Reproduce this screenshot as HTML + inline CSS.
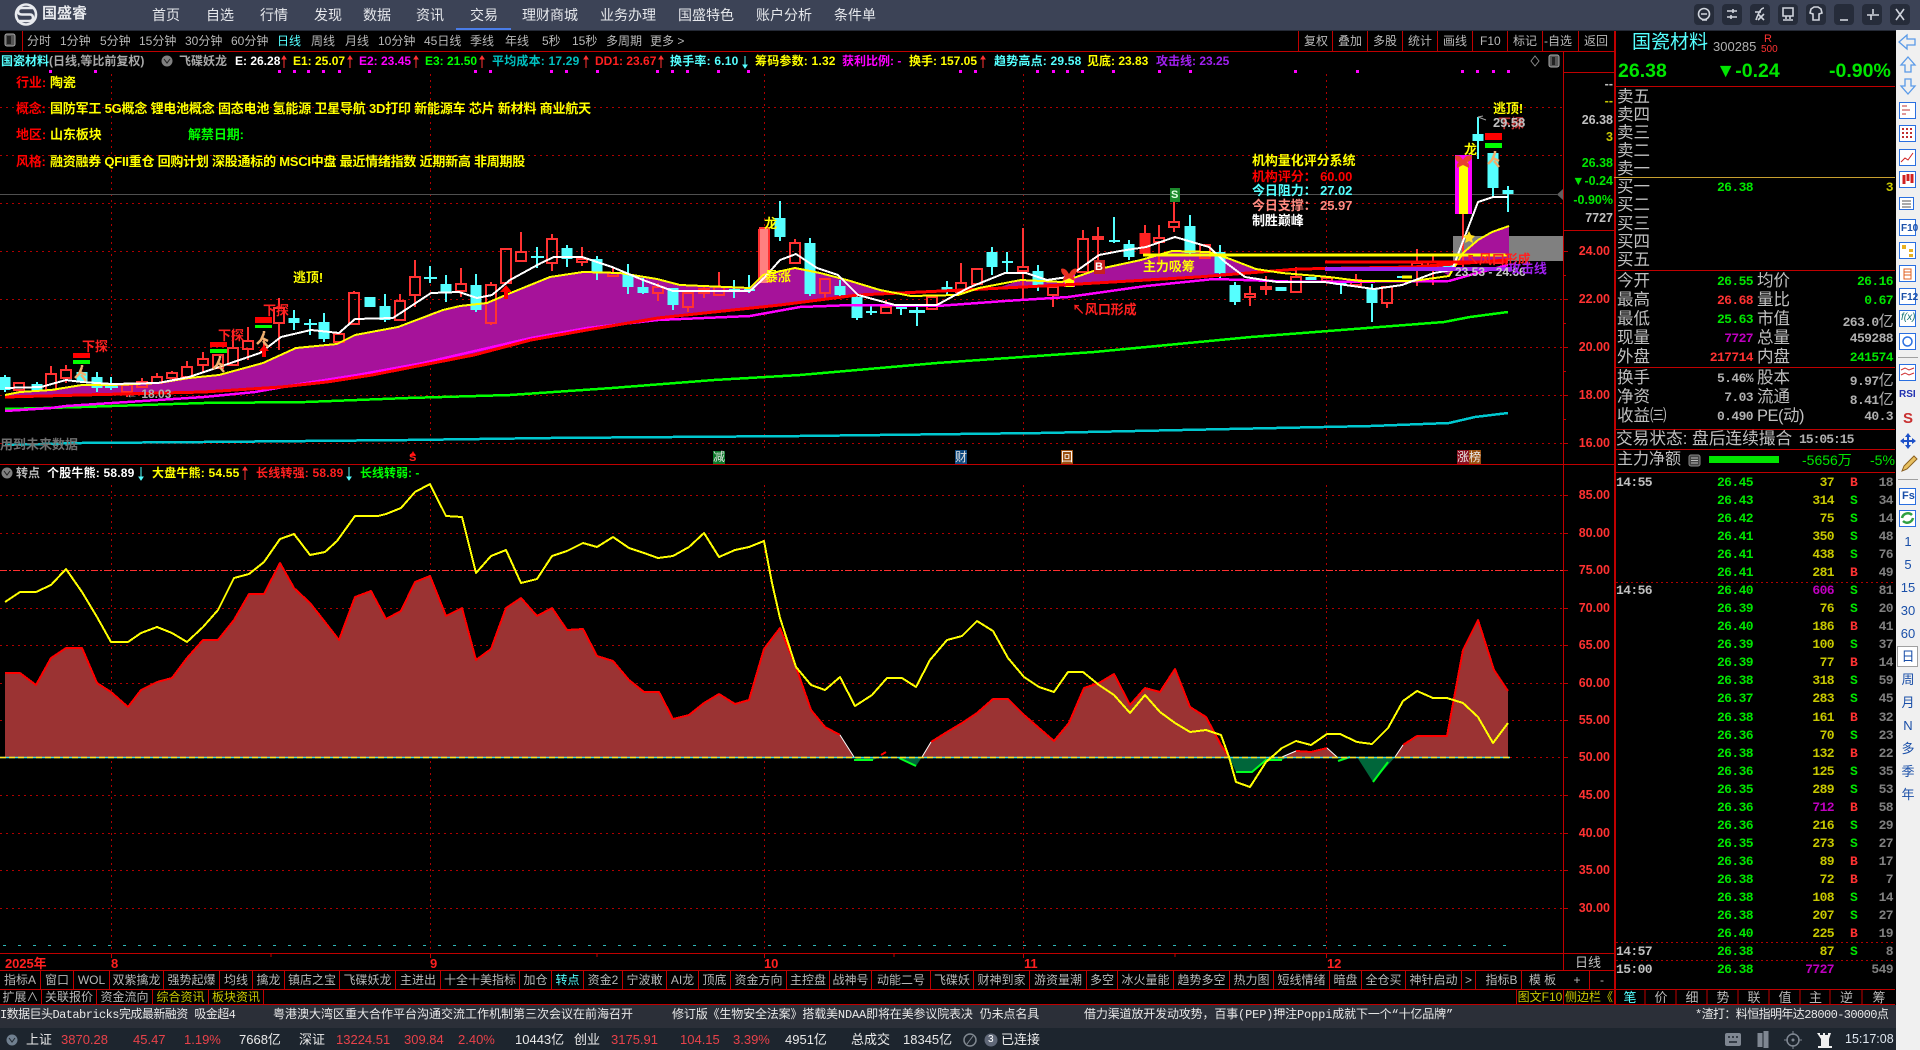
<!DOCTYPE html>
<html lang="zh"><head><meta charset="utf-8"><title>国盛睿</title>
<style>
html,body{margin:0;padding:0;background:#000;width:1920px;height:1050px;overflow:hidden}
body{position:relative;font-family:"Liberation Sans","Noto Sans CJK SC",sans-serif;color:#c0c0c0}
.t{position:absolute;white-space:nowrap;line-height:1}
.n{font-size:14px;color:#e6e8ec;top:8px}
.b{font-size:12px;color:#b8b8b8;top:35px}
.i{font-size:12px;font-weight:700;top:55px}
.l{font-size:13px;font-weight:700;letter-spacing:-.08px}
.lb{display:inline-block;width:34px;color:#ff0000}
.a{font-size:12.5px;font-weight:700;color:#ff3232;right:310px}
.an{font-size:12.5px;font-weight:700;right:307px}
.q{font-family:"Liberation Mono",monospace;font-size:13px;letter-spacing:-.6px;font-weight:700}
.z{font-size:16.5px;color:#c0c0c0;left:1617px;font-weight:400}
.z2{font-size:16.5px;color:#c0c0c0;left:1757px}
.s1{right:167px}.s2{right:27px}
.k{position:absolute;top:972px;height:17px;line-height:17px;text-align:center;font-size:12px;color:#b8b8b8;white-space:nowrap;overflow:hidden}
.k2{position:absolute;top:990px;height:15px;line-height:15px;text-align:center;font-size:12px;color:#b8b8b8;white-space:nowrap;overflow:hidden}
.f{position:absolute;top:1009px;font-size:12px;color:#e8e8e8;white-space:nowrap;line-height:1;font-family:"Liberation Mono","Noto Sans CJK SC",monospace}
.o{position:absolute;top:1033px;font-size:13px;white-space:nowrap;line-height:1}
.ow{color:#eaeaea}.or{color:#e8424a}
.r{color:#ff3232}.y{color:#ffff00}.g{color:#00ff00}.c{color:#55ffff}.w{color:#fff}.m{color:#ff00ff}.p{color:#a020f0}.h{color:#c0c0c0}
.row{position:absolute;left:1616px;width:278px;height:14px;font-family:"Liberation Mono",monospace;font-size:13px;letter-spacing:-.6px;font-weight:700;line-height:14px}
.row span{position:absolute;top:0}
.row .tm{left:0;color:#c0c0c0}
.row .pr{right:141px;color:#00e600}
.row .vo{right:60px;color:#c8c800}
.row .bs{left:234px;color:#00e600}
.row .bb{left:234px;color:#ff3232}
.row .nu{right:1px;color:#808080}
.row .mg{right:60px;color:#c000c0}
.sb{position:absolute;left:1898px;width:20px;text-align:center;font-size:13px;color:#1a4fa8;line-height:1}
</style></head><body>

<div style="position:absolute;left:0;top:0;width:1920px;height:30px;background:#3c4356"></div>
<div style="position:absolute;left:0;top:30px;width:1896px;height:1px;background:#252a36"></div>
<div style="position:absolute;left:456px;top:28px;width:55px;height:2px;background:#4a7de8"></div>
<div style="position:absolute;left:1896px;top:30px;width:24px;height:1020px;background:#f0f0f0"></div>
<div style="position:absolute;left:0;top:1005px;width:1896px;height:23px;background:#2b2f38"></div>
<div style="position:absolute;left:0;top:1028px;width:1896px;height:22px;background:#1d252e"></div>

<svg width="1920" height="1050" style="position:absolute;left:0;top:0">
<!-- logo -->
<circle cx="26" cy="14.5" r="10" fill="none" stroke="#e8eaee" stroke-width="2.6"/>
<path d="M33 8H22Q18 8 18 11.500Q18 14.500 22 14.500H30Q33 14.500 33 18Q33 21 29 21H17" fill="none" stroke="#e8eaee" stroke-width="2.6"/>
<!-- window buttons -->
<g fill="#262c3a"><rect x="1694" y="4" width="20" height="21" rx="4"/><rect x="1722" y="4" width="20" height="21" rx="4"/><rect x="1750" y="4" width="20" height="21" rx="4"/><rect x="1778" y="4" width="20" height="21" rx="4"/><rect x="1806" y="4" width="20" height="21" rx="4"/><rect x="1834" y="4" width="20" height="21" rx="4"/><rect x="1862" y="4" width="20" height="21" rx="4"/><rect x="1890" y="4" width="20" height="21" rx="4"/></g>
<g fill="none" stroke="#d0d4dc" stroke-width="1.600">
<circle cx="1704" cy="14" r="5.500"/><path d="M1701 14h6M1702 20h5"/>
<path d="M1727 11h10M1727 17h10M1733 9v4M1731 15v4"/>
<path d="M1756 20q4-12 8-12M1755 12h6M1758 14l6 6M1764 14l-6 6"/>
<path d="M1783 8h10v8h-10zM1786 16v3M1790 16v3M1783 20h10"/>
<path d="M1811 9l3-2h4l3 2 1 4-3 1v6h-6v-6l-3-1z"/>
<path d="M1840 20h8"/>
<path d="M1873 9v5M1867 15h6M1873 15h6M1871 15v5" />
<path d="M1896 9l8 11M1904 9l-8 11"/>
</g>
<!-- structure lines -->
<g stroke="#c00000" stroke-width="1" shape-rendering="crispEdges" fill="none">
<path d="M0 51.500H1614M1563 72.500H1614M1563 230.500H1614M0 464.500H1614M0 953.500H1614M0 970.500H1614M0 989.500H1895M0 1004.500H1895"/>
<path d="M1614 86.500H1895M1614 270.500H1895M1614 367.500H1895M1614 429.500H1895M1614 449.500H1895M1614 472.500H1895"/>
<path d="M22.500 31V51M1298.500 31V51M1332.500 31V51M1367.500 31V51M1402.500 31V51M1437.500 31V51M1472.500 31V51M1507.500 31V51M1542.500 31V51M1578.500 31V51"/>
<path d="M1615 31V1005" stroke-width="2"/>
<path d="M1563.500 51V971"/>
<path d="M1645 989V1005M1676 989V1005M1707 989V1005M1738 989V1005M1769 989V1005M1800 989V1005M1830 989V1005M1862 989V1005"/>
<path d="M1563 251.500h5M1563 299.500h5M1563 347.500h5M1563 395.500h5M1563 443.500h5M1563 275.500h3M1563 323.500h3M1563 371.500h3M1563 419.500h3M1563 495.500h5M1563 533.500h5M1563 570.500h5M1563 608.500h5M1563 645.500h5M1563 683.500h5M1563 720.500h5M1563 757.500h5M1563 795.500h5M1563 833.500h5M1563 870.500h5M1563 908.500h5"/>
<path d="M111.500 954v4M271 954v3M430.500 954v4M597 954v3M764.500 954v4M894 954v3M1023.500 954v4M1175 954v3M1326.500 954v4"/>
</g>
<path d="M1614 177.500H1895" stroke="#c8a030" shape-rendering="crispEdges"/>
<!-- grid main -->
<g stroke="#b00000" stroke-width="1" stroke-dasharray="2 4" shape-rendering="crispEdges" fill="none">
<path d="M0 107.500H1563M0 155.500H1563M0 203.500H1563M0 251.500H1563M0 299.500H1563M0 347.500H1563M0 395.500H1563M0 443.500H1563"/>
<path d="M111.500 74V452M430.500 74V452M764.500 74V452M1023.500 74V452M1326.500 74V452"/>
<path d="M0 495.500H1563M0 533.500H1563M0 608.500H1563M0 645.500H1563M0 683.500H1563M0 720.500H1563M0 795.500H1563M0 833.500H1563M0 870.500H1563M0 908.500H1563"/>
<path d="M111.500 485V954M430.500 485V954M764.500 485V954M1023.500 485V954M1326.500 485V954"/>
<path d="M1510 757.500H1563"/>
</g>
<path d="M0 570.500H1563" stroke="#ff3030" stroke-dasharray="7 2 2 2" shape-rendering="crispEdges"/>
<path d="M0 194.500H1557" stroke="#505050" stroke-width="1" shape-rendering="crispEdges"/>
<path d="M1563 189v11l-6-5.500z" fill="#606060"/>
<!-- dots -->
<path d="M49 71.500h3M94 71.500h3M278 71.500h3M293 71.500h3M307 71.500h3M322 71.500h3M338 71.500h3M368 71.500h3M474 71.500h3M489 71.500h3M550 71.500h3M565 71.500h3M596 71.500h3M656 71.500h3M671 71.500h3M686 71.500h3M717 71.500h3M747 71.500h3M959 71.500h3M974 71.500h3M1036 71.500h3M1052 71.500h3M1066 71.500h3M1081 71.500h3M1112 71.500h3M1158 71.500h3M1189 71.500h3M1294 71.500h3M1356 71.500h3M1461 71.500h3M1476 71.500h3M1492 71.500h3M1507 71.500h3" stroke="#ff00ff" stroke-width="3" shape-rendering="crispEdges"/>
<!-- gray band -->
<rect x="1453" y="236" width="110" height="25" fill="#808080"/>
<!-- magenta fill -->
<g fill="#a6129a">
<path d="M5 395 20 392 51 390 82 385 112 385 158 383 189 378 219 375 263 363 296 348 337 344 355 335 398 327 434 312 460 306 487 303 513 292 550 277 583 272 620 273 657 279 680 285 750 288 763 275 795 268 820 273 847 280 880 290 900 294 858 295 780 305 714 312 658 318 587 330 531 340 474 355 423 365 372 375 327 382 281 387 204 392 82 395 5 397Z"/>
<path d="M1000 287 1021 280 1062 282 1099 269 1141 260 1172 251 1209 252 1230 259 1256 269 1277 272 1198 277 1062 285 1023 287Z"/>
<path d="M1440 270 1449 276 1463 253 1478 240 1492 232 1509 226V260L1413 267Z"/>
</g>
<!-- candles -->
<g fill="none" stroke="#ff3232" stroke-width="2" shape-rendering="crispEdges">
<path d="M14 383h10v7h-10zM46 374h10v16h-10zM61 370h10v8h-10zM122 385h10v7h-10zM137 382h10v5h-10zM152 377h10v6h-10zM167 373h10v5h-10zM182 367h10v10h-10zM198 359h10v6h-10zM213 355h10v13h-10zM228 348h10v17h-10zM243 341h10v8h-10zM274 308h10v15h-10zM334 334h10v8h-10zM349 293h10v31h-10zM395 301h10v19h-10zM410 277h10v18h-10zM456 284h10v7h-10zM486 285h10v38h-10zM501 249h10v34h-10zM516 252h10v9h-10zM547 239h10v24h-10zM577 259h10v3h-10zM608 273h10v3h-10zM653 287h10v6h-10zM683 293h10v14h-10zM699 289h10v4h-10zM714 287h10v8h-10zM790 243h10v20h-10zM820 279h10v14h-10zM881 307h10v6h-10zM927 297h10v12h-10zM956 283h10v9h-10zM972 269h10v15h-10zM1018 267h10v4h-10zM1048 287h10v8h-10zM1078 239h10v33h-10zM1093 237h10v2h-10zM1154 238h10v4h-10zM1169 222h10v5h-10zM1200 245h10v13h-10zM1245 294h10v3h-10zM1261 287h10v2h-10zM1291 277h10v15h-10zM1322 278h10v3h-10zM1351 280h10v5h-10zM1382 287h10v16h-10zM1412 263h10v4h-10zM1428 262h10v5h-10z"/>
<path d="M51 366V374M66 365V370M66 378V383M127 392V397M142 378V382M157 373V377M172 371V373M187 361V367M203 352V359M203 365V372M233 330V348M248 327V341M248 349V360M279 298V308M279 323V350M339 332V334M354 291V293M400 294V301M415 260V277M415 295V307M461 268V284M461 291V297M491 282V285M491 323V325M521 232V252M552 234V239M552 263V271M582 247V259M582 262V266M613 268V273M613 276V277M658 283V287M658 293V301M688 307V312M704 287V289M704 293V298M719 272V287M795 239V243M825 293V300M886 300V307M886 313V314M961 263V283M1023 228V267M1023 271V300M1053 295V307M1083 230V239M1098 227V237M1098 239V263M1145 225V233M1159 225V238M1159 242V265M1174 202V222M1174 227V232M1250 286V294M1250 297V306M1266 276V287M1266 289V295M1296 267V277M1356 274V280M1387 303V308M1417 249V263M1417 267V286M1433 255V262M1433 267V285M1463 214V267M264 340V350" />
</g>
<path d="M1145 233V254" stroke="#ff2020" stroke-width="11" shape-rendering="crispEdges"/>
<path d="M764 229V283" stroke="#ff8080" stroke-width="9" shape-rendering="crispEdges"/>
<path d="M759 228H769M759 229V283M769 229V283" stroke="#ff3232" stroke-width="2" shape-rendering="crispEdges"/>
<g fill="none" stroke="#55ffff" shape-rendering="crispEdges">
<path stroke-width="11" d="M5 377V390M37 384V390M82 372V382M97 377V388M294 318V323M324 322V339M370 297V307M385 306V320M446 284V293M476 285V310M567 248V259M597 259V272M628 274V287M643 287V293M673 288V305M780 218V237M810 243V294M840 286V295M857 297V318M947 287V291M992 252V267M1038 271V285M1129 244V257M1190 226V253M1220 252V273M1235 285V302M1281 287V291M1311 277V280M1341 283V285M1372 288V303M1448 262V268M1478 134V141M1493 153V188M1508 190V194"/>
<path stroke-width="2" d="M5 375V392M37 382V392M97 372V392M111 377V390M294 310V330M310 319V335M324 313V342M385 294V322M430 266V283M446 275V302M476 274V312M537 247V268M567 245V267M597 256V280M628 264V294M643 278V294M673 288V310M734 280V298M749 275V293M780 201V241M810 238V296M840 280V297M857 295V320M871 304V315M901 305V315M917 306V326M947 281V296M992 247V275M1007 252V273M1038 265V291M1114 217V243M1129 240V260M1190 215V255M1220 245V279M1235 282V305M1341 283V294M1372 284V322M1478 117V159M1493 153V197M1508 186V212"/>
<path stroke-width="2" d="M105 387H118M304 324H317M424 278H437M531 257H544M729 290H740M744 290H755M866 312H877M896 308H907M1002 262H1013M1109 241H1120M1397 277H1408"/>
</g>
<path d="M909 310H925V313H909Z" fill="#55ffff"/>
<path d="M1402 277h10" stroke="#ffff00" stroke-width="3"/>
<!-- special bars -->
<rect x="1455" y="155" width="17" height="59" fill="#ff00ff"/><rect x="1459" y="160" width="9" height="54" fill="#ffff00"/>
<rect x="1064" y="274" width="11" height="13" fill="#ff00ff"/><rect x="1065" y="280" width="9" height="7" fill="#ffff00"/>
<!-- MAs -->
<g fill="none" stroke-linejoin="round" shape-rendering="crispEdges">
<path stroke="#00c8d0" stroke-width="2.500" d="M5 445 82 443 204 442 408 440 551 438 673 437 800 436 1041 433 1371 426 1449 423 1475 417 1508 413"/>
<path stroke="#00ff00" stroke-width="2.500" d="M5 409 82 407 112 406 204 403 306 402 408 398 510 395 612 388 714 380 800 375 937 363 1094 352 1251 337 1444 322 1470 317 1508 312"/>
<path stroke="#ff00ff" stroke-width="2.500" d="M5 411 51 408 66 406 112 403 204 397 255 392 306 383 357 375 423 363 531 338 587 328 658 320 750 316 800 307 853 305 937 306 1005 301 1068 297 1146 286 1214 279 1303 282 1449 281 1470 275 1508 265"/>
<path stroke="#ff0000" stroke-width="3" d="M5 397 82 395 204 392 281 387 327 382 372 375 423 365 474 355 531 340 587 330 658 318 714 312 780 305 858 295 900 293 963 290 1023 287 1062 285 1198 277 1298 269 1413 267 1508 260"/>
<path stroke="#ffff00" stroke-width="2" d="M5 395 20 392 51 390 82 385 112 385 158 383 189 378 219 375 263 363 296 348 337 344 355 335 398 327 443 310 460 306 487 303 513 292 550 277 583 272 620 273 657 279 680 285 750 288 763 275 795 268 820 273 847 280 880 290 911 296 958 295 979 288 1021 280 1062 282 1099 269 1141 260 1172 251 1209 252 1230 259 1256 269 1282 273 1329 277 1360 281 1413 281 1449 276 1463 253 1478 240 1492 232 1509 226"/>
<path stroke="#ffffff" stroke-width="2" d="M5 388 41 387 66 380 82 382 112 384 158 383 189 377 219 367 260 353 281 337 311 330 339 333 355 319 393 318 431 293 459 292 477 298 492 295 510 280 541 263 554 257 582 257 612 267 643 280 673 291 750 291 765 277 780 260 796 254 817 268 838 275 858 295 895 305 937 305 968 288 1005 273 1026 273 1047 280 1068 277 1099 255 1120 251 1146 247 1175 237 1209 247 1225 262 1245 277 1277 282 1324 282 1374 289 1402 285 1434 273 1452 270 1478 202 1493 197 1508 197"/>
<path stroke="#ffff00" stroke-width="3" d="M1143 255H1508"/>
<path stroke="#ff0000" stroke-width="3" d="M1325 262H1508"/>
<path stroke="#a020f0" stroke-width="4" d="M1325 269H1512"/>
</g>
<!-- runners -->
<g fill="none" stroke="#f0b070" stroke-width="2.500">
<path id="rn" d="M82 365v2M82 367l-3 7-4 4M80 372l6 3M81 375l5 6"/>
<path d="M220 356v2M220 358l-3 7-4 4M218 363l6 3M219 366l5 6"/>
<path d="M264 331v2M264 333l-3 7-4 4M262 338l6 3M263 341l5 6"/>
<path d="M1495 151v2M1495 153l-3 7-4 4M1493 158l6 3M1494 161l5 6"/>
</g>
<!-- red/green tags -->
<g shape-rendering="crispEdges">
<rect x="73" y="353" width="17" height="5" fill="#ff0000"/><rect x="73" y="360" width="17" height="4" fill="#00ff00"/>
<rect x="210" y="342" width="17" height="5" fill="#ff0000"/><rect x="210" y="349" width="17" height="4" fill="#00ff00"/>
<rect x="255" y="317" width="17" height="6" fill="#ff0000"/><rect x="255" y="325" width="17" height="3" fill="#00ff00"/>
<rect x="1485" y="133" width="17" height="7" fill="#ff0000"/><rect x="1485" y="143" width="17" height="5" fill="#00ff00"/>
</g>
<path d="M264 345l-5 6h3v6h4v-6h3zM506 285l-6 7h4v7h4v-7h4z" fill="#ff0000"/>
<path d="M1469 231l2 4 4 1-3 3 1 4-4-2-4 2 1-4-3-3 4-1z" fill="#ffe020"/>
<path d="M1061 269q4-2 8 5q4-7 8-5q0 5-4 7q2 2 2 5l-6-3l-6 3q0-3 2-5q-4-2-4-7z" fill="#e83020"/>
<path d="M1455 156q5-2 8 4q3-6 9-4q0 5-5 6q3 2 2 6l-6-3l-6 3q-1-4 2-6q-4-1-4-6z" fill="#e84030"/>
<path d="M1478 117l8 3M1478 117l5-1" stroke="#a0a0a0" fill="none"/>
<path d="M1170 188h10v14h-10z M1094 260h11v14h-11z" fill="#1c8a2c"/><path d="M1094 260h11v14h-11z" fill="#c82020"/>
<path d="M713 451h12v13h-12z" fill="#0c7a2a"/>
<path d="M955 450h12v14h-12z" fill="#104a80"/><path d="M1061 450h12v14h-12z" fill="#9a5010"/>
<path d="M1457 450h12v14h-12z" fill="#8a1020"/><path d="M1469 450h12v14h-12z" fill="#9a5010"/>
<path d="M413 451l-3 5h6z" fill="#ff0000"/>
<!-- sub panel -->
<g fill="#9b3333" stroke="#ff0000" stroke-width="2" stroke-linejoin="round">
<path d="M5 757V673L20 673 36 685 51 658 66 648 82 648 97 683 111 692 128 707 141 690 157 682 172 678 187 658 203 640 218 640 234 620 249 594 264 594 280 563 294 588 310 603 325 622 339 640 355 597 371 591 386 619 401 611 415 582 430 576 446 616 462 608 476 660 491 649 506 608 521 598 537 616 552 608 567 630 583 629 597 656 613 661 629 680 644 692 659 692 673 719 689 715 704 703 719 694 735 704 749 700 764 649 780 628 796 667 811 710 825 727 840 735 854 757Z" stroke="none"/>
<path d="M922 757 931 742 947 732 962 723 977 713 993 699 1008 699 1024 715 1039 728 1054 741 1069 723 1084 688 1099 683 1114 674 1130 705 1145 688 1160 692 1175 669 1190 707 1206 717 1221 745 1229 757Z" stroke="none"/>
<path d="M1282 757 1296 751 1311 752 1327 748 1337 757Z" stroke="none"/>
<path d="M1395 757 1403 745 1417 736 1447 736 1463 650 1478 620 1494 670 1508 691V757Z" stroke="none"/>
</g>
<g fill="none" stroke="#ff0000" stroke-width="2" stroke-linejoin="round" shape-rendering="crispEdges">
<path d="M5 673 20 673 36 685 51 658 66 648 82 648 97 683 111 692 128 707 141 690 157 682 172 678 187 658 203 640 218 640 234 620 249 594 264 594 280 563 294 588 310 603 325 622 339 640 355 597 371 591 386 619 401 611 415 582 430 576 446 616 462 608 476 660 491 649 506 608 521 598 537 616 552 608 567 630 583 629 597 656 613 661 629 680 644 692 659 692 673 719 689 715 704 703 719 694 735 704 749 700 764 649 780 628 796 667 811 710 825 727 840 735"/>
<path d="M931 742 947 732 962 723 977 713 993 699 1008 699 1024 715 1039 728 1054 741 1069 723 1084 688 1099 683 1114 674 1130 705 1145 688 1160 692 1175 669 1190 707 1206 717 1221 745 1229 757"/>
<path d="M1296 751 1311 752 1327 748M1403 745 1417 736 1447 736 1463 650 1478 620 1494 670 1508 691M881 755 886 752"/>
</g>
<path d="M840 735 854 757M922 757 931 742M1282 757 1296 751M1327 748 1337 757M1395 757 1403 745" stroke="#fff" fill="none"/>
<g fill="#00663a"><path d="M1229 757 1236 772 1252 772 1266 760 1282 760 1288 757Z"/><path d="M1357 757 1373 782 1395 757Z"/><path d="M899 757 916 766 922 757Z"/><path d="M854 757 858 760 873 760 880 757Z"/></g>
<path d="M1236 772H1252L1266 760H1282M1373 782 1388 762M899 758 916 766M854 760H873M1338 761 1350 757" fill="none" stroke="#00ff20" stroke-width="2"/>
<path d="M0 757.500H1510" stroke="#40e0e0" stroke-width="1.500"/>
<path d="M0 757.500H1510" stroke="#ffe020" stroke-width="1.500" stroke-dasharray="6 3"/>
<path d="M3 945.500H1510" stroke="#30b8b8" stroke-width="1" stroke-dasharray="3 12" shape-rendering="crispEdges"/>
<path fill="none" stroke="#ffff00" stroke-width="2" stroke-linejoin="round" shape-rendering="crispEdges" d="M5 602 20 592 36 592 51 585 66 569 82 592 97 617 111 642 128 642 141 633 157 627 172 633 187 642 203 627 218 610 234 578 249 574 264 562 280 539 294 534 310 555 325 552 337 541 355 516 378 516 386 514 401 508 415 492 430 484 446 516 462 517 476 573 491 556 506 550 521 583 537 579 552 556 567 551 583 543 597 547 613 537 629 548 644 553 658 558 673 556 689 547 704 533 719 557 735 550 749 547 764 541 772 583 780 618 796 667 811 685 825 690 840 677 855 706 872 695 887 678 902 678 916 687 930 660 947 640 962 636 977 621 993 631 1008 658 1024 677 1039 687 1054 692 1068 672 1083 672 1099 685 1114 695 1130 713 1145 695 1160 712 1175 723 1190 732 1206 730 1221 735 1229 757 1236 782 1250 787 1266 762 1282 748 1296 741 1311 745 1327 734 1340 734 1357 742 1372 744 1388 728 1403 701 1417 691 1433 698 1447 698 1463 703 1478 717 1493 743 1508 723"/>
<!-- info icons -->
<circle cx="167" cy="61" r="5.500" fill="#808080"/><path d="M164 59l3 4 3-4" stroke="#202020" fill="none"/>
<circle cx="7" cy="473" r="5.500" fill="#808080"/><path d="M4 471l3 4 3-4" stroke="#202020" fill="none"/>
<rect x="5" y="34" width="10" height="12" rx="2" fill="#555" stroke="#aaa"/><rect x="7" y="36" width="4" height="8" fill="#222"/>
<path d="M1535 56l4 5-4 5-4-5z" fill="none" stroke="#8a8a8a"/><rect x="1549" y="55" width="10" height="12" rx="2" fill="#555" stroke="#aaa"/><rect x="1552" y="57" width="3" height="8" fill="#222"/>
<!-- green bar -->
<rect x="1709" y="456" width="70" height="7" fill="#00e600"/>
<rect x="1689" y="455" width="11" height="11" rx="2" fill="#444" stroke="#888"/><path d="M1691 458h7M1691 460.500h7M1691 463h7" stroke="#bbb"/>
<!-- arrows in info row -->
<g stroke="#ff3232" stroke-width="1" fill="#ff3232">
<path d="M284 56V68M282 59l2-3 2 3zM350 56V68M348 59l2-3 2 3zM416 56V68M414 59l2-3 2 3zM482 56V68M480 59l2-3 2 3zM586 56V68M584 59l2-3 2 3zM661 56V68M659 59l2-3 2 3zM983 56V68M981 59l2-3 2 3z"/>
</g>
<path d="M745 56V68M743 65l2 3 2-3z" stroke="#55ffff" fill="#55ffff"/>
<path d="M141 467V480M139 477l2 3 2-3zM349 467V480M347 477l2 3 2-3z" stroke="#55ffff" fill="#55ffff"/>
<path d="M245 467V480M243 470l2-3 2 3z" stroke="#ff3232" fill="#ff3232"/>
<!-- sidebar icons -->
<g fill="none" stroke="#5a9ae8" stroke-width="1.300">
<path d="M1899 42l8-7v4h8v6h-8v4z"/>
<path d="M1908 57l7 8h-4v7h-6v-7h-4z"/>
<path d="M1908 94l7-8h-4v-7h-6v7h-4z"/>
</g>
<g fill="#fff" stroke="#2a6fe0" stroke-width="1.200" shape-rendering="crispEdges">
<rect x="1899.500" y="102.500" width="16" height="16"/><rect x="1899.500" y="125.500" width="16" height="16"/><rect x="1899.500" y="149.500" width="16" height="16"/><rect x="1899.500" y="171.500" width="16" height="16"/><rect x="1899.500" y="197.500" width="14" height="12"/><rect x="1899.500" y="219.500" width="16" height="16"/><rect x="1899.500" y="242.500" width="16" height="16"/><rect x="1899.500" y="265.500" width="16" height="16"/><rect x="1899.500" y="288.500" width="16" height="16"/><rect x="1899.500" y="310.500" width="16" height="16"/><rect x="1899.500" y="333.500" width="16" height="16"/><rect x="1899.500" y="364.500" width="16" height="16"/><rect x="1899.500" y="488.500" width="16" height="16"/><rect x="1899.500" y="510.500" width="16" height="16"/>
</g>
<path d="M1902 106h5M1902 110h8M1902 114h4" stroke="#c03030"/>
<path d="M1902 129h2M1906 129h2M1910 129h2M1902 133h2M1906 133h2M1910 133h2M1902 137h2M1906 137h2M1910 137h2" stroke="#c03030" stroke-width="2"/>
<path d="M1901 162l4-4 3 2 5-7" stroke="#d02020" fill="none"/>
<path d="M1904 175v9M1908 174v7M1912 174v9" stroke="#d02020" stroke-width="3"/>
<path d="M1902 201h9M1902 204h9M1902 207h9" stroke="#555"/>
<path d="M1902 245h4v4h-4zM1909 249h4v3h-4zM1909 254h4v3h-4z" fill="#e8b020"/>
<path d="M1904 269h7v10h-7zM1904 272h7M1904 275h7" fill="#fff" stroke="#e06020"/>
<circle cx="1907.500" cy="341.500" r="4.500" fill="none" stroke="#2a6fe0" stroke-width="1.500"/>
<path d="M1901 370l4-2 4 2 5-2M1901 375l4-2 4 2 5-2" stroke="#d03030" fill="none"/>
<path d="M1902 518a6 6 0 0 1 10-3M1913 518a6 6 0 0 1-10 3" stroke="#30a040" stroke-width="2.500" fill="none"/>
<path d="M1898 357.500H1918M1898 479.500H1918" stroke="#a0a0a0"/>
<path d="M1908 433l3 4h-2v3h3v-2l4 3-4 3v-2h-3v3h2l-3 4-3-4h2v-3h-3v2l-4-3 4-3v2h3v-3h-2z" fill="#1c50c8"/>
<path d="M1902 471l2-5 10-10 3 3-10 10z" fill="#e8c060" stroke="#8a6020"/>
<rect x="1897.500" y="646.500" width="20" height="20" fill="#fff" stroke="#a0a0a0"/>
<!-- status bar icons -->
<circle cx="12" cy="1040" r="5.500" fill="#708090"/><path d="M9 1038l3 4 3-4" stroke="#202830" fill="none"/>
<circle cx="970" cy="1040" r="6" fill="none" stroke="#808890" stroke-width="1.500"/><path d="M967 1044l6-8" stroke="#808890"/>
<circle cx="991" cy="1040" r="6.500" fill="#606878"/>
<rect x="1725" y="1033" width="16" height="13" rx="2" fill="#7f8792"/><path d="M1728 1037h2M1732 1037h2M1736 1037h2M1729 1042h8" stroke="#1d252e" stroke-width="1.500"/>
<path d="M1760 1033v14M1766 1031v17" stroke="#7f8792" stroke-width="5"/>
<circle cx="1793" cy="1040" r="6" fill="none" stroke="#7f8792" stroke-width="1.500"/><circle cx="1793" cy="1040" r="1.500" fill="#7f8792"/><path d="M1793 1031v4M1793 1045v4M1784 1040h4M1798 1040h4" stroke="#7f8792"/>
<path d="M1817 1033h3v2h3v-2h2v2h3v-2h3l-2 6v7h3v2h-14v-2h3v-7z" fill="#f0f0f0"/>
</svg>

<!-- logo text -->
<div class="t" style="left:42px;top:6px;font-size:15px;font-weight:700;color:#e8eaee">国盛睿</div>
<!-- nav -->
<div class="t n" style="left:152px">首页</div><div class="t n" style="left:206px">自选</div><div class="t n" style="left:260px">行情</div><div class="t n" style="left:314px">发现</div><div class="t n" style="left:363px">数据</div><div class="t n" style="left:416px">资讯</div><div class="t n" style="left:470px">交易</div><div class="t n" style="left:522px">理财商城</div><div class="t n" style="left:600px">业务办理</div><div class="t n" style="left:678px">国盛特色</div><div class="t n" style="left:756px">账户分析</div><div class="t n" style="left:834px">条件单</div>
<!-- toolbar -->
<div class="t b" style="left:27px">分时</div><div class="t b" style="left:60px">1分钟</div><div class="t b" style="left:100px">5分钟</div><div class="t b" style="left:139px">15分钟</div><div class="t b" style="left:185px">30分钟</div><div class="t b" style="left:231px">60分钟</div><div class="t b c" style="left:277px;color:#55ffff">日线</div><div class="t b" style="left:311px">周线</div><div class="t b" style="left:345px">月线</div><div class="t b" style="left:378px">10分钟</div><div class="t b" style="left:424px">45日线</div><div class="t b" style="left:470px">季线</div><div class="t b" style="left:505px">年线</div><div class="t b" style="left:542px">5秒</div><div class="t b" style="left:572px">15秒</div><div class="t b" style="left:606px">多周期</div><div class="t b" style="left:650px">更多 &gt;</div>
<div class="t b" style="left:1304px">复权</div><div class="t b" style="left:1338px">叠加</div><div class="t b" style="left:1373px">多股</div><div class="t b" style="left:1408px">统计</div><div class="t b" style="left:1443px">画线</div><div class="t b" style="left:1480px">F10</div><div class="t b" style="left:1513px">标记</div><div class="t b" style="left:1544px">-自选</div><div class="t b" style="left:1584px">返回</div>
<!-- info row -->
<div class="t i" style="left:1px"><span class="c">国瓷材料</span><span style="color:#a8a8a8">(日线,等比前复权)</span></div>
<div class="t i" style="left:179px;color:#a8a8a8">飞碟妖龙</div>
<div class="t i w" style="left:235px">E: 26.28</div>
<div class="t i y" style="left:293px">E1: 25.07</div>
<div class="t i m" style="left:359px">E2: 23.45</div>
<div class="t i g" style="left:425px">E3: 21.50</div>
<div class="t i" style="left:492px;color:#00c0c0;letter-spacing:.2px">平均成本: 17.29</div>
<div class="t i r" style="left:595px;color:#ff2020">DD1: 23.67</div>
<div class="t i c" style="left:670px;letter-spacing:.2px">换手率: 6.10</div>
<div class="t i y" style="left:755px;letter-spacing:.2px">筹码参数: 1.32</div>
<div class="t i m" style="left:842px">获利比例: -</div>
<div class="t i y" style="left:909px">换手: 157.05</div>
<div class="t i c" style="left:994px;letter-spacing:.2px">趋势高点: 29.58</div>
<div class="t i y" style="left:1087px">见底: 23.83</div>
<div class="t i p" style="left:1156px">攻击线: 23.25</div>
<!-- left labels -->
<div class="t l" style="left:16px;top:76px"><span class="lb">行业:</span><span class="y">陶瓷</span></div>
<div class="t l" style="left:16px;top:102px;letter-spacing:-.2px"><span class="lb">概念:</span><span class="y">国防军工 5G概念 锂电池概念 固态电池 氢能源 卫星导航 3D打印 新能源车 芯片 新材料 商业航天</span></div>
<div class="t l" style="left:16px;top:128px"><span class="lb">地区:</span><span class="y">山东板块</span></div>
<div class="t l g" style="left:188px;top:128px">解禁日期:</div>
<div class="t l" style="left:16px;top:155px;letter-spacing:-.24px"><span class="lb">风格:</span><span class="y">融资融券 QFII重仓 回购计划 深股通标的 MSCI中盘 最近情绪指数 近期新高 非周期股</span></div>
<!-- institution -->
<div class="t l y" style="left:1252px;top:154px">机构量化评分系统</div>
<div class="t l" style="left:1252px;top:170px;color:#ff0000">机构评分： 60.00</div>
<div class="t l c" style="left:1252px;top:184px">今日阻力： 27.02</div>
<div class="t l" style="left:1252px;top:199px;color:#ff8c82">今日支撑： 25.97</div>
<div class="t l w" style="left:1252px;top:214px">制胜巅峰</div>
<!-- annotations -->
<div class="t l y" style="left:293px;top:271px">逃顶!</div>
<div class="t l y" style="left:1493px;top:102px">逃顶!</div>
<div class="t l" style="left:1498px;top:117px;color:#c03030">下探</div>
<div class="t l" style="left:1493px;top:116px;color:#c0c0c0">29.58</div>
<div class="t l" style="left:82px;top:340px;color:#ff2020">下探</div>
<div class="t l" style="left:218px;top:329px;color:#ff2020">下探</div>
<div class="t l" style="left:263px;top:304px;color:#ff2020">下探</div>
<div class="t" style="left:126px;top:388px;font-size:12px;font-weight:700;color:#b0b0b0">←&nbsp;18.03</div>
<div class="t" style="left:0;top:438px;font-size:13px;font-weight:700;color:#707070">用到未来数据</div>
<div class="t l y" style="left:765px;top:270px">暴涨</div>
<div class="t l y" style="left:764px;top:217px">龙</div>
<div class="t l y" style="left:1464px;top:143px">龙</div>
<div class="t l y" style="left:1143px;top:260px">主力吸筹</div>
<div class="t l" style="left:1072px;top:303px;color:#ff2020">↖风口形成</div>
<div class="t l" style="left:1466px;top:253px;color:#ff2020">↖风口形成</div>
<div class="t" style="left:1455px;top:266px;font-size:12px;font-weight:700;color:#c8c8c8">23.53 - 24.66</div>
<div class="t l p" style="left:1508px;top:262px;color:#a020f0">攻击线</div>
<div class="t" style="left:1171px;top:190px;font-size:11px;color:#e0ffe0;font-weight:700">S</div>
<div class="t" style="left:1095px;top:262px;font-size:11px;color:#fff;font-weight:700">B</div>
<div class="t" style="left:409px;top:453px;font-size:11px;color:#ff2020;font-weight:700">S</div>
<div class="t" style="left:713px;top:451px;font-size:12px;color:#e0e0e0">减</div>
<div class="t" style="left:955px;top:451px;font-size:12px;color:#e0e0e0">财</div>
<div class="t" style="left:1061px;top:451px;font-size:12px;color:#fff">回</div>
<div class="t" style="left:1457px;top:451px;font-size:12px;color:#e8e8e8">涨榜</div>
<!-- sub title -->
<div class="t i" style="left:16px;top:467px;color:#b8b8b8">转点</div>
<div class="t i w" style="left:47px;top:467px;letter-spacing:.2px">个股牛熊: 58.89</div>
<div class="t i y" style="left:152px;top:467px;letter-spacing:.2px">大盘牛熊: 54.55</div>
<div class="t i" style="left:256px;top:467px;color:#ff2020;letter-spacing:.2px">长线转强: 58.89</div>
<div class="t i g" style="left:360px;top:467px">长线转弱: -</div>
<!-- axis -->
<div class="t a" style="top:245px">24.00</div><div class="t a" style="top:293px">22.00</div><div class="t a" style="top:341px">20.00</div><div class="t a" style="top:389px">18.00</div><div class="t a" style="top:437px">16.00</div>
<div class="t an" style="top:78px;color:#c0c0c0">--</div><div class="t an" style="top:95px;color:#c8c800">--</div><div class="t an" style="top:114px;color:#c0c0c0">26.38</div><div class="t an" style="top:131px;color:#c8c800">3</div><div class="t an" style="top:157px;color:#00e600">26.38</div><div class="t an" style="top:175px;color:#00e600">▼-0.24</div><div class="t an" style="top:194px;color:#00e600">-0.90%</div><div class="t an" style="top:212px;color:#c0c0c0">7727</div>
<div class="t a" style="top:489px">85.00</div><div class="t a" style="top:527px">80.00</div><div class="t a" style="top:564px">75.00</div><div class="t a" style="top:602px">70.00</div><div class="t a" style="top:639px">65.00</div><div class="t a" style="top:677px">60.00</div><div class="t a" style="top:714px">55.00</div><div class="t a" style="top:751px">50.00</div><div class="t a" style="top:789px">45.00</div><div class="t a" style="top:827px">40.00</div><div class="t a" style="top:864px">35.00</div><div class="t a" style="top:902px">30.00</div>
<!-- dates -->
<div class="t l" style="left:5px;top:957px;color:#ff2020">2025年</div><div class="t l" style="left:111px;top:957px;color:#ff2020">8</div><div class="t l" style="left:430px;top:957px;color:#ff2020">9</div><div class="t l" style="left:764px;top:957px;color:#ff2020">10</div><div class="t l" style="left:1024px;top:957px;color:#ff2020">11</div><div class="t l" style="left:1327px;top:957px;color:#ff2020">12</div>
<div class="t" style="left:1575px;top:956px;font-size:13px;color:#c0c0c0">日线</div>
<!-- quote head -->
<div class="t" style="left:1632px;top:33px;font-size:19px;color:#55ffff">国瓷材料</div>
<div class="t" style="left:1713px;top:40px;font-size:13px;color:#b0b0b0">300285</div>
<div class="t" style="left:1764px;top:34px;font-size:11px;color:#ff3232">R</div>
<div class="t" style="left:1761px;top:45px;font-size:10px;color:#ff3232">500</div>
<div class="t" style="left:1618px;top:62px;font-size:19.5px;font-weight:700;color:#00e600">26.38</div>
<div class="t" style="left:1716px;top:62px;font-size:19.5px;font-weight:700;color:#00e600">▼-0.24</div>
<div class="t" style="left:1829px;top:62px;font-size:19.5px;font-weight:700;color:#00e600">-0.90%</div>
<div class="t z" style="top:89px">卖五</div><div class="t z" style="top:107px">卖四</div><div class="t z" style="top:125px">卖三</div><div class="t z" style="top:143px">卖二</div><div class="t z" style="top:161px">卖一</div>
<div class="t z" style="top:179px">买一</div><div class="t z" style="top:197px">买二</div><div class="t z" style="top:216px">买三</div><div class="t z" style="top:234px">买四</div><div class="t z" style="top:252px">买五</div>
<div class="t q s1" style="top:181px;color:#00e600">26.38</div>
<div class="t q s2" style="top:181px;color:#c8c800">3</div>
<div class="t z" style="top:273px">今开</div><div class="t z" style="top:292px">最高</div><div class="t z" style="top:311px">最低</div><div class="t z" style="top:330px">现量</div><div class="t z" style="top:349px">外盘</div>
<div class="t z2" style="top:273px">均价</div><div class="t z2" style="top:292px">量比</div><div class="t z2" style="top:311px">市值</div><div class="t z2" style="top:330px">总量</div><div class="t z2" style="top:349px">内盘</div>
<div class="t q s1" style="top:275px;color:#00e600">26.55</div><div class="t q s1" style="top:294px;color:#ff3232">26.68</div><div class="t q s1" style="top:313px;color:#00e600">25.63</div><div class="t q s1" style="top:332px;color:#c000c0">7727</div><div class="t q s1" style="top:351px;color:#ff3232">217714</div>
<div class="t q s2" style="top:275px;color:#00e600">26.16</div><div class="t q s2" style="top:294px;color:#00e600">0.67</div><div class="t q s2" style="top:313px;color:#b0b0b0">263.0<span style="font-family:'Noto Sans CJK SC';font-weight:400;font-size:15px">亿</span></div><div class="t q s2" style="top:332px;color:#b0b0b0">459288</div><div class="t q s2" style="top:351px;color:#00e600">241574</div>
<div class="t z" style="top:370px">换手</div><div class="t z" style="top:389px">净资</div><div class="t z" style="top:408px">收益㈢</div>
<div class="t z2" style="top:370px">股本</div><div class="t z2" style="top:389px">流通</div><div class="t z2" style="top:408px;letter-spacing:-.5px">PE(动)</div>
<div class="t q s1" style="top:372px;color:#b0b0b0">5.46%</div><div class="t q s1" style="top:391px;color:#b0b0b0">7.03</div><div class="t q s1" style="top:410px;color:#b0b0b0">0.490</div>
<div class="t q s2" style="top:372px;color:#b0b0b0">9.97<span style="font-family:'Noto Sans CJK SC';font-weight:400;font-size:15px">亿</span></div><div class="t q s2" style="top:391px;color:#b0b0b0">8.41<span style="font-family:'Noto Sans CJK SC';font-weight:400;font-size:15px">亿</span></div><div class="t q s2" style="top:410px;color:#b0b0b0">40.3</div>
<div class="t" style="left:1616px;top:431px;font-size:16.7px;color:#c0c0c0">交易状态: 盘后连续撮合</div>
<div class="t q" style="left:1799px;top:433px;color:#b0b0b0;letter-spacing:-1px">15:05:15</div>
<div class="t" style="left:1617px;top:452px;font-size:16px;color:#c0c0c0">主力净额</div>
<div class="t" style="left:1802px;top:453px;font-size:14px;color:#00e600">-5656万</div>
<div class="t" style="left:1870px;top:453px;font-size:14px;color:#00e600">-5%</div>
<!-- ticks -->
<div class="row" style="top:476px"><span class="tm">14:55</span><span class="pr">26.45</span><span class="vo">37</span><span class="bb">B</span><span class="nu">18</span></div>
<div class="row" style="top:494px"><span class="pr">26.43</span><span class="vo">314</span><span class="bs">S</span><span class="nu">34</span></div>
<div class="row" style="top:512px"><span class="pr">26.42</span><span class="vo">75</span><span class="bs">S</span><span class="nu">14</span></div>
<div class="row" style="top:530px"><span class="pr">26.41</span><span class="vo">350</span><span class="bs">S</span><span class="nu">48</span></div>
<div class="row" style="top:548px"><span class="pr">26.41</span><span class="vo">438</span><span class="bs">S</span><span class="nu">76</span></div>
<div class="row" style="top:566px"><span class="pr">26.41</span><span class="vo">281</span><span class="bb">B</span><span class="nu">49</span></div>
<div class="row" style="top:584px"><span class="tm">14:56</span><span class="pr">26.40</span><span class="mg">606</span><span class="bs">S</span><span class="nu">81</span></div>
<div class="row" style="top:602px"><span class="pr">26.39</span><span class="vo">76</span><span class="bs">S</span><span class="nu">20</span></div>
<div class="row" style="top:620px"><span class="pr">26.40</span><span class="vo">186</span><span class="bb">B</span><span class="nu">41</span></div>
<div class="row" style="top:638px"><span class="pr">26.39</span><span class="vo">100</span><span class="bs">S</span><span class="nu">37</span></div>
<div class="row" style="top:656px"><span class="pr">26.39</span><span class="vo">77</span><span class="bb">B</span><span class="nu">14</span></div>
<div class="row" style="top:674px"><span class="pr">26.38</span><span class="vo">318</span><span class="bs">S</span><span class="nu">59</span></div>
<div class="row" style="top:692px"><span class="pr">26.37</span><span class="vo">283</span><span class="bs">S</span><span class="nu">45</span></div>
<div class="row" style="top:711px"><span class="pr">26.38</span><span class="vo">161</span><span class="bb">B</span><span class="nu">32</span></div>
<div class="row" style="top:729px"><span class="pr">26.36</span><span class="vo">70</span><span class="bs">S</span><span class="nu">23</span></div>
<div class="row" style="top:747px"><span class="pr">26.38</span><span class="vo">132</span><span class="bb">B</span><span class="nu">22</span></div>
<div class="row" style="top:765px"><span class="pr">26.36</span><span class="vo">125</span><span class="bs">S</span><span class="nu">35</span></div>
<div class="row" style="top:783px"><span class="pr">26.35</span><span class="vo">289</span><span class="bs">S</span><span class="nu">53</span></div>
<div class="row" style="top:801px"><span class="pr">26.36</span><span class="mg">712</span><span class="bb">B</span><span class="nu">58</span></div>
<div class="row" style="top:819px"><span class="pr">26.36</span><span class="vo">216</span><span class="bs">S</span><span class="nu">29</span></div>
<div class="row" style="top:837px"><span class="pr">26.35</span><span class="vo">273</span><span class="bs">S</span><span class="nu">27</span></div>
<div class="row" style="top:855px"><span class="pr">26.36</span><span class="vo">89</span><span class="bb">B</span><span class="nu">17</span></div>
<div class="row" style="top:873px"><span class="pr">26.38</span><span class="vo">72</span><span class="bb">B</span><span class="nu">7</span></div>
<div class="row" style="top:891px"><span class="pr">26.38</span><span class="vo">108</span><span class="bs">S</span><span class="nu">14</span></div>
<div class="row" style="top:909px"><span class="pr">26.38</span><span class="vo">207</span><span class="bs">S</span><span class="nu">27</span></div>
<div class="row" style="top:927px"><span class="pr">26.40</span><span class="vo">225</span><span class="bb">B</span><span class="nu">19</span></div>
<div class="row" style="top:945px"><span class="tm">14:57</span><span class="pr">26.38</span><span class="vo">87</span><span class="bs">S</span><span class="nu">8</span></div>
<div class="row" style="top:963px"><span class="tm">15:00</span><span class="pr">26.38</span><span class="mg">7727</span><span class="nu">549</span></div>
<svg width="1920" height="1050" style="position:absolute;left:0;top:0;pointer-events:none"><path d="M1616 582.500H1895M1616 942.500H1895M1616 960.500H1895" stroke="#b00000" stroke-dasharray="2 3" shape-rendering="crispEdges"/>
<g stroke="#c00000" shape-rendering="crispEdges"><path d="M40.500 971V989M73.500 971V989M109.500 971V989M163.500 971V989M219.500 971V989M252.500 971V989M284.500 971V989M339.500 971V989M395.500 971V989M440.500 971V989M519.500 971V989M551.500 971V989M583.500 971V989M622.500 971V989M666.500 971V989M698.500 971V989M730.500 971V989M786.500 971V989M829.500 971V989M871.500 971V989M930.500 971V989M973.500 971V989M1029.500 971V989M1086.500 971V989M1117.500 971V989M1173.500 971V989M1229.500 971V989M1273.500 971V989M1329.500 971V989M1361.500 971V989M1405.500 971V989M1461.500 971V989M1475.500 971V989M1521.500 971V989M1589.500 971V989M41.500 989V1005M96.500 989V1005M152.500 989V1005M208.500 989V1005M263.500 989V1005M1516.500 989V1005M1563.500 989V1005"/></g></svg>
<!-- bottom tabs -->
<div class="k" style="left:0;width:40px">指标A</div><div class="k" style="left:41px;width:32px">窗口</div><div class="k" style="left:74px;width:35px">WOL</div><div class="k" style="left:110px;width:53px">双紫擒龙</div><div class="k" style="left:164px;width:55px">强势起爆</div><div class="k" style="left:220px;width:32px">均线</div><div class="k" style="left:253px;width:31px">擒龙</div><div class="k" style="left:285px;width:54px">镇店之宝</div><div class="k" style="left:340px;width:55px">飞碟妖龙</div><div class="k" style="left:396px;width:44px">主进出</div><div class="k" style="left:441px;width:78px">十全十美指标</div><div class="k" style="left:520px;width:31px">加仓</div><div class="k" style="left:552px;width:31px;color:#55ffff">转点</div><div class="k" style="left:584px;width:38px">资金2</div><div class="k" style="left:623px;width:43px">宁波敢</div><div class="k" style="left:667px;width:31px">AI龙</div><div class="k" style="left:699px;width:31px">顶底</div><div class="k" style="left:731px;width:55px">资金方向</div><div class="k" style="left:787px;width:42px">主控盘</div><div class="k" style="left:830px;width:41px">战神号</div><div class="k" style="left:872px;width:58px">动能二号</div><div class="k" style="left:931px;width:42px">飞碟妖</div><div class="k" style="left:974px;width:55px">财神到家</div><div class="k" style="left:1030px;width:56px">游资量潮</div><div class="k" style="left:1087px;width:30px">多空</div><div class="k" style="left:1118px;width:55px">冰火量能</div><div class="k" style="left:1174px;width:55px">趋势多空</div><div class="k" style="left:1230px;width:43px">热力图</div><div class="k" style="left:1274px;width:55px">短线情绪</div><div class="k" style="left:1330px;width:31px">暗盘</div><div class="k" style="left:1362px;width:43px">全仓买</div><div class="k" style="left:1406px;width:55px">神针启动</div><div class="k" style="left:1462px;width:13px">&gt;</div><div class="k" style="left:1482px;width:39px">指标B</div><div class="k" style="left:1522px;width:41px">模 板</div><div class="k" style="left:1565px;width:24px">+</div><div class="k" style="left:1590px;width:24px">-</div>
<div class="k2" style="left:0;width:41px">扩展∧</div><div class="k2" style="left:42px;width:54px">关联报价</div><div class="k2" style="left:97px;width:55px">资金流向</div><div class="k2" style="left:153px;width:55px;color:#c8c800">综合资讯</div><div class="k2" style="left:209px;width:54px;color:#c8c800">板块资讯</div>
<div class="k2" style="left:1517px;width:46px;color:#c8c800">图文F10</div><div class="k2" style="left:1564px;width:50px;color:#c8c800">侧边栏《</div>
<div class="k2 c" style="left:1616px;width:28px;color:#55ffff;font-size:13px">笔</div><div class="k2" style="left:1646px;width:30px;font-size:13px">价</div><div class="k2" style="left:1677px;width:30px;font-size:13px">细</div><div class="k2" style="left:1708px;width:30px;font-size:13px">势</div><div class="k2" style="left:1739px;width:30px;font-size:13px">联</div><div class="k2" style="left:1770px;width:30px;font-size:13px">值</div><div class="k2" style="left:1801px;width:29px;font-size:13px">主</div><div class="k2" style="left:1831px;width:31px;font-size:13px">逆</div><div class="k2" style="left:1863px;width:32px;font-size:13px">筹</div>
<!-- ticker -->
<div class="f" style="left:0;letter-spacing:-.55px">I数据巨头Databricks完成最新融资 吸金超4</div>
<div class="f" style="left:273px">粤港澳大湾区重大合作平台沟通交流工作机制第三次会议在前海召开</div>
<div class="f" style="left:672px;letter-spacing:-.15px">修订版《生物安全法案》搭载美NDAA即将在美参议院表决 仍未点名具</div>
<div class="f" style="left:1084px;letter-spacing:-.15px">借力渠道放开发动攻势，百事(PEP)押注Poppi成就下一个“十亿品牌”</div>
<div class="f" style="left:1695px;letter-spacing:-.6px">*渣打：料恒指明年达28000-30000点</div>
<!-- status -->
<div class="o ow" style="left:26px">上证</div><div class="o or" style="left:61px">3870.28</div><div class="o or" style="left:133px">45.47</div><div class="o or" style="left:184px">1.19%</div><div class="o ow" style="left:239px">7668亿</div>
<div class="o ow" style="left:299px">深证</div><div class="o or" style="left:336px">13224.51</div><div class="o or" style="left:404px">309.84</div><div class="o or" style="left:458px">2.40%</div><div class="o ow" style="left:515px">10443亿</div>
<div class="o ow" style="left:574px">创业</div><div class="o or" style="left:611px">3175.91</div><div class="o or" style="left:680px">104.15</div><div class="o or" style="left:733px">3.39%</div><div class="o ow" style="left:785px">4951亿</div>
<div class="o ow" style="left:851px">总成交</div><div class="o ow" style="left:903px">18345亿</div>
<div class="o" style="left:988px;top:1035px;font-size:10px;color:#fff">3</div>
<div class="o ow" style="left:1001px">已连接</div>
<div class="o" style="left:1845px;color:#e0e8f0;font-size:12.5px">15:17:08</div>
<!-- sidebar text -->
<div class="t" style="left:1901px;top:224px;font-size:10px;color:#1a4fa8;font-weight:700">F10</div>
<div class="t" style="left:1901px;top:293px;font-size:10px;color:#1a4fa8;font-weight:700">F12</div>
<div class="t" style="left:1901px;top:313px;font-size:10px;color:#107070;font-style:italic">f(x)</div>
<div class="t" style="left:1899px;top:390px;font-size:10px;color:#2030b0;font-weight:700">RSI</div>
<div class="t" style="left:1903px;top:411px;font-size:15px;color:#c83030;font-weight:700">S</div>
<div class="t" style="left:1902px;top:491px;font-size:11px;color:#1a4fa8;font-weight:700">Fs</div>
<div class="sb" style="top:535px">1</div><div class="sb" style="top:558px">5</div><div class="sb" style="top:581px">15</div><div class="sb" style="top:604px">30</div><div class="sb" style="top:627px">60</div><div class="sb" style="top:650px">日</div><div class="sb" style="top:673px">周</div><div class="sb" style="top:696px">月</div><div class="sb" style="top:719px">N</div><div class="sb" style="top:742px">多</div><div class="sb" style="top:765px">季</div><div class="sb" style="top:788px">年</div>
</body></html>
